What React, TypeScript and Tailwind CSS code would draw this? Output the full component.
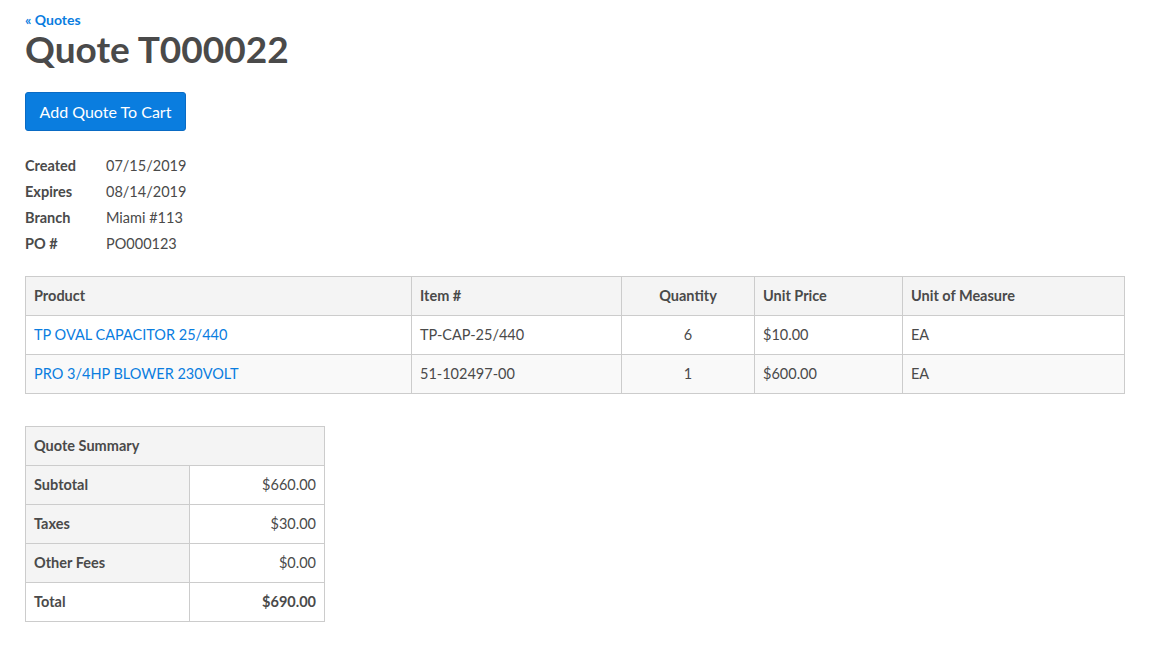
import React from "react";

const font = { fontFamily: "Lato, 'Noto Sans', sans-serif" };

export default function App() {
  const info = [
    ["Created", "07/15/2019"],
    ["Expires", "08/14/2019"],
    ["Branch", "Miami #113"],
    ["PO #", "PO000123"],
  ];
  const rows = [
    ["TP OVAL CAPACITOR 25/440", "TP-CAP-25/440", "6", "$10.00", "EA"],
    ["PRO 3/4HP BLOWER 230VOLT", "51-102497-00", "1", "$600.00", "EA"],
  ];
  const summary = [
    ["Subtotal", "$660.00"],
    ["Taxes", "$30.00"],
    ["Other Fees", "$0.00"],
  ];
  return (
    <div className="min-h-[651px] bg-white text-[#4a4a4a] px-[25px] pt-[12px] pb-8" style={font}>
      <a className="block text-[14px] font-bold text-[#0a7ddf] leading-[16px]">« Quotes</a>
      <h1 className="text-[37px] font-bold text-[#4a4a4a] leading-[40px] mt-[1px]">Quote T000022</h1>
      <button className="mt-[23px] h-[39px] w-[161px] rounded-[3px] bg-[#0a7ddf] border border-[#0a6bc4] text-white text-[16px] flex items-center justify-center">
        Add Quote To Cart
      </button>
      <div className="mt-[22px] flex flex-col">
        {info.map(([k, v]) => (
          <div key={k} className="flex h-[26px] items-center text-[14.5px]">
            <span className="w-[81px] font-bold">{k}</span>
            <span>{v}</span>
          </div>
        ))}
      </div>
      <table className="mt-[19px] w-[1100px] border-collapse text-[14.5px]">
        <thead>
          <tr className="bg-[#f4f4f4] h-[39px]">
            <th className="border border-[#cccccc] text-left font-bold px-[8px] w-[386px]">Product</th>
            <th className="border border-[#cccccc] text-left font-bold px-[8px] w-[210px]">Item #</th>
            <th className="border border-[#cccccc] text-center font-bold px-[8px] w-[133px]">Quantity</th>
            <th className="border border-[#cccccc] text-left font-bold px-[8px] w-[148px]">Unit Price</th>
            <th className="border border-[#cccccc] text-left font-bold px-[8px]">Unit of Measure</th>
          </tr>
        </thead>
        <tbody>
          {rows.map((r, i) => (
            <tr key={i} className={`h-[39px] ${i % 2 === 1 ? "bg-[#f9f9f9]" : "bg-white"}`}>
              <td className="border border-[#cccccc] px-[8px] text-[#0a7ddf]">{r[0]}</td>
              <td className="border border-[#cccccc] px-[8px]">{r[1]}</td>
              <td className="border border-[#cccccc] px-[8px] text-center">{r[2]}</td>
              <td className="border border-[#cccccc] px-[8px]">{r[3]}</td>
              <td className="border border-[#cccccc] px-[8px]">{r[4]}</td>
            </tr>
          ))}
        </tbody>
      </table>
      <table className="mt-[32px] w-[300px] border-collapse text-[14.5px]">
        <thead>
          <tr className="bg-[#f4f4f4] h-[39px]">
            <th colSpan={2} className="border border-[#cccccc] text-left font-bold px-[8px]">Quote Summary</th>
          </tr>
        </thead>
        <tbody>
          {summary.map(([k, v]) => (
            <tr key={k} className="h-[39px]">
              <td className="border border-[#cccccc] px-[8px] font-bold bg-[#f4f4f4] w-[164px]">{k}</td>
              <td className="border border-[#cccccc] px-[8px] text-right">{v}</td>
            </tr>
          ))}
          <tr className="h-[39px]">
            <td className="border border-[#cccccc] px-[8px] font-bold">Total</td>
            <td className="border border-[#cccccc] px-[8px] text-right font-bold">$690.00</td>
          </tr>
        </tbody>
      </table>
    </div>
  );
}
